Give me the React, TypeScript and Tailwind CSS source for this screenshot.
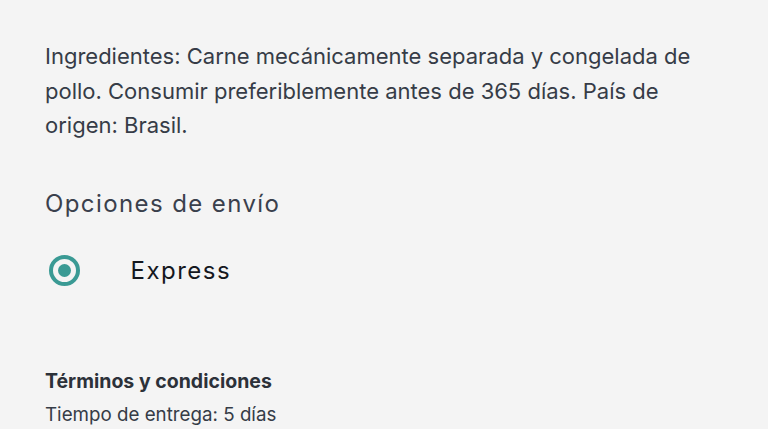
export default function App() {
  return (
    <div
      className="w-[768px] h-[429px] overflow-hidden bg-[#f4f4f4] pl-[45px] pr-[40px] pt-[39px]"
      style={{ fontFamily: "Inter, 'Noto Sans', sans-serif" }}
    >
      {/* Description */}
      <p className="text-[22px] leading-[34.5px] text-[#363c47]">
        Ingredientes: Carne mecánicamente separada y congelada de pollo. Consumir preferiblemente antes de 365 días. País de origen: Brasil.
      </p>

      {/* Shipping options */}
      <h2 className="mt-[46.5px] text-[24px] leading-[30px] text-[#3a404c] tracking-[1.4px]">
        Opciones de envío
      </h2>
      <div className="mt-[36px] flex items-center">
        <span className="w-[31px] h-[31px] rounded-full border-[4px] border-[#3a9a94] flex items-center justify-center ml-[3.5px]">
          <span className="w-[13px] h-[13px] rounded-full bg-[#3a9a94]" />
        </span>
        <span className="ml-[51px] text-[24px] leading-[30px] text-[#15181e] tracking-[1.5px]">Express</span>
      </div>

      {/* Terms */}
      <h3 className="mt-[82px] text-[19.5px] leading-[26px] font-bold text-[#2c3139]">Términos y condiciones</h3>
      <p className="mt-[8px] text-[18.75px] leading-[26px] text-[#363c47]">Tiempo de entrega: 5 días</p>
    </div>
  );
}
